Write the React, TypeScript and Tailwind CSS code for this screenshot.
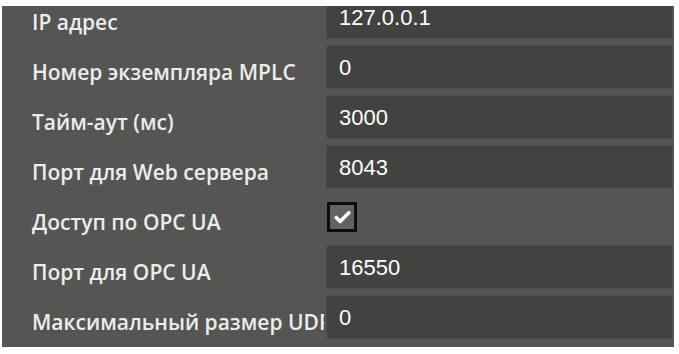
import { Check } from "lucide-react";

type Row = { label: string; value?: string; checkbox?: boolean };

const rows: Row[] = [
  { label: "IP адрес", value: "127.0.0.1" },
  { label: "Номер экземпляра MPLC", value: "0" },
  { label: "Тайм-аут (мс)", value: "3000" },
  { label: "Порт для Web сервера", value: "8043" },
  { label: "Доступ по OPC UA", checkbox: true },
  { label: "Порт для OPC UA", value: "16550" },
  { label: "Максимальный размер UDP пакета", value: "0" },
];

function SettingRow({ row }: { row: Row }) {
  return (
    <div className="flex h-[50px] shrink-0">
      <div className="w-[322px] shrink-0 overflow-hidden whitespace-nowrap pl-[30px] pt-[6px] flex items-center text-[21px] font-semibold text-[#ececec] font-['Open_Sans',sans-serif]">
        {row.label}
      </div>
      <div className="flex-1 pl-[2px] pr-[1px] pb-[6px]">
        {row.checkbox ? (
          <div className="h-full flex items-center pl-[1px]">
            <div className="w-[30px] h-[30px] border-[3px] border-[#0d0d0d] bg-[#626260] flex items-center justify-center">
              <Check className="w-[19px] h-[19px] text-white" strokeWidth={4.5} />
            </div>
          </div>
        ) : (
          <div className="h-full bg-[#424240] border border-[#4e4e4c] flex items-center pl-[12px] text-[22px] text-white font-['Liberation_Sans',Arial,sans-serif]">
            {row.value}
          </div>
        )}
      </div>
    </div>
  );
}

export default function App() {
  return (
    <div className="w-[679px] h-[354px] bg-white pt-[6px] pl-[2px]">
      <div className="w-[672px] h-[341px] bg-[#555553] overflow-hidden">
        <div className="flex flex-col -mt-[11px]">
          {rows.map((row) => (
            <SettingRow key={row.label} row={row} />
          ))}
        </div>
      </div>
    </div>
  );
}
